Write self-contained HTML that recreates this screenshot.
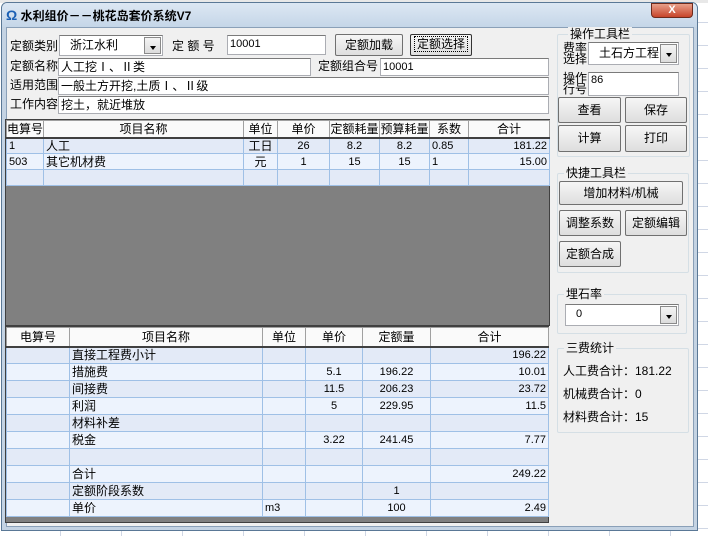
<!DOCTYPE html>
<html><head><meta charset="utf-8">
<style>
*{box-sizing:border-box;margin:0;padding:0}
body{width:708px;height:536px;position:relative;overflow:hidden;background:#fff;font-family:"Liberation Sans","Noto Sans CJK SC","WenQuanYi Zen Hei",sans-serif;font-size:12px;color:#000}
.a{position:absolute}
.lbl{position:absolute;font-size:12px;line-height:14px;white-space:nowrap}
.inp{position:absolute;background:#fff;border:1px solid #abadb3;border-top-color:#7a7a7a;font-size:11px;line-height:16px;padding-left:2px;white-space:nowrap}
.btn{position:absolute;background:linear-gradient(#f6f6f6,#dedede);border:1px solid #707070;border-radius:2px;text-align:center;font-size:12px;white-space:nowrap}
.grp{position:absolute;border:1px solid #d5dfe5;border-radius:2px}
.grp span{position:absolute;top:-8px;left:6px;background:#f0f0f0;padding:0 2px;font-size:12px;line-height:14px}
.dd{position:absolute;right:1px;top:1px;bottom:1px;width:17px;background:linear-gradient(#f4f4f4,#dcdcdc);border:1px solid #8a8a8a}
.dd:after{content:"";position:absolute;left:5px;top:8px;border-left:3px solid transparent;border-right:3px solid transparent;border-top:4px solid #000}
table{border-collapse:collapse;table-layout:fixed;position:absolute;font-size:11px}
td{border:1px solid #9fc0e6;height:17px;padding:0 2px;white-space:nowrap;overflow:hidden;line-height:15px}
.t1 td{height:16px;line-height:14px}
th{font-weight:normal;border:1px solid #a0a0a0;border-bottom:2px solid #404040;background:#fafafa;height:17px;font-size:12px;line-height:14px}
.t2 th{height:19px}
tr.o td{background:#e3eaf7}
tr.e td{background:#edf3fd}
.r{text-align:right}.c{text-align:center}
</style></head><body>
<div class="a" style="left:698px;top:0;width:10px;height:536px;background:repeating-linear-gradient(#fff 0 22px,#d0d7e5 22px 23px)"></div>
<div class="a" style="left:0;top:530px;width:708px;height:6px;background:repeating-linear-gradient(90deg,#fff 0 60px,#d0d7e5 60px 61px)"></div>
<div class="a" style="left:0;top:0;width:708px;height:3px;background:#e8e8e8"></div>
<div class="a" style="left:1px;top:2px;width:697px;height:529px;background:#c4d3e3;border:1px solid #5a7896;border-radius:6px 6px 0 0"></div>
<div class="a" style="left:2px;top:3px;width:695px;height:24px;background:linear-gradient(#dce7f3,#c5d6e8);border-radius:5px 5px 0 0"></div>
<div class="lbl" style="left:6px;top:8px;font-weight:bold;font-size:12px"><span style="color:#1a5fb4;font-size:14px">Ω</span> 水利组价－－桃花岛套价系统V7</div>
<div class="a" style="left:651px;top:3px;width:42px;height:15px;background:linear-gradient(#e8a08a,#c7442a);border:1px solid #6d2a1c;border-radius:0 0 4px 4px;color:#fff;font-weight:bold;text-align:center;line-height:13px;font-size:11px">X</div>
<div class="a" style="left:6px;top:27px;width:688px;height:500px;background:#f0f0f0;border:1px solid #8aa0b8"></div>

<div class="lbl" style="left:10px;top:39px">定额类别</div>
<div class="inp" style="left:59px;top:35px;width:104px;height:21px;font-size:12px;line-height:19px;padding-left:10px">浙江水利<div class="dd"></div></div>
<div class="lbl" style="left:172px;top:39px">定 额 号</div>
<div class="inp" style="left:227px;top:35px;width:99px;height:20px">10001</div>
<div class="btn" style="left:335px;top:34px;width:68px;height:22px;line-height:20px">定额加载</div>
<div class="btn" style="left:410px;top:34px;width:62px;height:22px;line-height:18px;border-color:#333"><span style="border:1px dotted #000;padding:0 2px">定额选择</span></div>
<div class="lbl" style="left:10px;top:59px">定额名称</div>
<div class="inp" style="left:58px;top:58px;width:253px;height:18px;font-size:12px;line-height:16px">人工挖Ⅰ、Ⅱ类</div>
<div class="lbl" style="left:318px;top:59px">定额组合号</div>
<div class="inp" style="left:380px;top:58px;width:169px;height:18px">10001</div>
<div class="lbl" style="left:10px;top:78px">适用范围</div>
<div class="inp" style="left:58px;top:77px;width:491px;height:18px;font-size:12px;line-height:16px">一般土方开挖,土质Ⅰ、Ⅱ级</div>
<div class="lbl" style="left:10px;top:97px">工作内容</div>
<div class="inp" style="left:58px;top:96px;width:491px;height:18px;font-size:12px;line-height:16px">挖土，就近堆放</div>

<div class="a" style="left:5px;top:119px;width:545px;height:207px;background:#808080;border:1px solid #404040"></div>
<table class="t1" style="left:6px;top:120px;width:543px">
<colgroup><col style="width:37px"><col style="width:200px"><col style="width:34px"><col style="width:52px"><col style="width:50px"><col style="width:50px"><col style="width:39px"><col style="width:81px"></colgroup>
<tr><th>电算号</th><th>项目名称</th><th>单位</th><th>单价</th><th>定额耗量</th><th>预算耗量</th><th>系数</th><th>合计</th></tr>
<tr class="o"><td>1</td><td style="font-size:12px">人工</td><td class="c" style="font-size:12px">工日</td><td class="c">26</td><td class="c">8.2</td><td class="c">8.2</td><td>0.85</td><td class="r">181.22</td></tr>
<tr class="e"><td>503</td><td style="font-size:12px">其它机材费</td><td class="c" style="font-size:12px">元</td><td class="c">1</td><td class="c">15</td><td class="c">15</td><td>1</td><td class="r">15.00</td></tr>
<tr class="o"><td></td><td></td><td></td><td></td><td></td><td></td><td></td><td></td></tr>
</table>

<div class="a" style="left:5px;top:326px;width:544px;height:197px;background:#808080;border:1px solid #404040"></div>
<table class="t2" style="left:6px;top:327px;width:542px">
<colgroup><col style="width:63px"><col style="width:193px"><col style="width:43px"><col style="width:57px"><col style="width:68px"><col style="width:118px"></colgroup>
<tr><th>电算号</th><th>项目名称</th><th>单位</th><th>单价</th><th>定额量</th><th>合计</th></tr>
<tr class="o"><td></td><td style="font-size:12px">直接工程费小计</td><td></td><td></td><td></td><td class="r">196.22</td></tr>
<tr class="e"><td></td><td style="font-size:12px">措施费</td><td></td><td class="c">5.1</td><td class="c">196.22</td><td class="r">10.01</td></tr>
<tr class="o"><td></td><td style="font-size:12px">间接费</td><td></td><td class="c">11.5</td><td class="c">206.23</td><td class="r">23.72</td></tr>
<tr class="e"><td></td><td style="font-size:12px">利润</td><td></td><td class="c">5</td><td class="c">229.95</td><td class="r">11.5</td></tr>
<tr class="o"><td></td><td style="font-size:12px">材料补差</td><td></td><td></td><td></td><td></td></tr>
<tr class="e"><td></td><td style="font-size:12px">税金</td><td></td><td class="c">3.22</td><td class="c">241.45</td><td class="r">7.77</td></tr>
<tr class="o"><td></td><td></td><td></td><td></td><td></td><td></td></tr>
<tr class="e"><td></td><td style="font-size:12px">合计</td><td></td><td></td><td></td><td class="r">249.22</td></tr>
<tr class="o"><td></td><td style="font-size:12px">定额阶段系数</td><td></td><td></td><td class="c">1</td><td></td></tr>
<tr class="e"><td></td><td style="font-size:12px">单价</td><td>m3</td><td></td><td class="c">100</td><td class="r">2.49</td></tr>
</table>

<div class="grp" style="left:557px;top:34px;width:133px;height:123px"><span style="left:10px">操作工具栏</span></div>
<div class="lbl" style="left:563px;top:43px;line-height:11px">费率<br>选择</div>
<div class="inp" style="left:588px;top:42px;width:91px;height:23px;font-size:12px;line-height:20px;padding-left:10px">土石方工程<div class="dd"></div></div>
<div class="lbl" style="left:563px;top:73px;line-height:11px">操作<br>行号</div>
<div class="inp" style="left:588px;top:72px;width:91px;height:24px;line-height:14px">86</div>
<div class="btn" style="left:558px;top:97px;width:63px;height:26px;line-height:24px">查看</div>
<div class="btn" style="left:625px;top:97px;width:62px;height:26px;line-height:24px">保存</div>
<div class="btn" style="left:558px;top:125px;width:63px;height:27px;line-height:25px">计算</div>
<div class="btn" style="left:625px;top:125px;width:62px;height:27px;line-height:25px">打印</div>

<div class="grp" style="left:557px;top:173px;width:132px;height:100px"><span>快捷工具栏</span></div>
<div class="btn" style="left:559px;top:181px;width:124px;height:24px;line-height:22px">增加材料/机械</div>
<div class="btn" style="left:559px;top:210px;width:62px;height:26px;line-height:24px">调整系数</div>
<div class="btn" style="left:625px;top:210px;width:62px;height:26px;line-height:24px">定额编辑</div>
<div class="btn" style="left:559px;top:241px;width:62px;height:26px;line-height:24px">定额合成</div>

<div class="grp" style="left:557px;top:294px;width:130px;height:40px"><span>埋石率</span></div>
<div class="inp" style="left:565px;top:304px;width:114px;height:22px;line-height:18px;padding-left:10px">0<div class="dd"></div></div>

<div class="grp" style="left:557px;top:348px;width:132px;height:85px"><span>三费统计</span></div>
<div class="lbl" style="left:563px;top:364px">人工费合计：181.22</div>
<div class="lbl" style="left:563px;top:387px">机械费合计：0</div>
<div class="lbl" style="left:563px;top:410px">材料费合计：15</div>
</body></html>
